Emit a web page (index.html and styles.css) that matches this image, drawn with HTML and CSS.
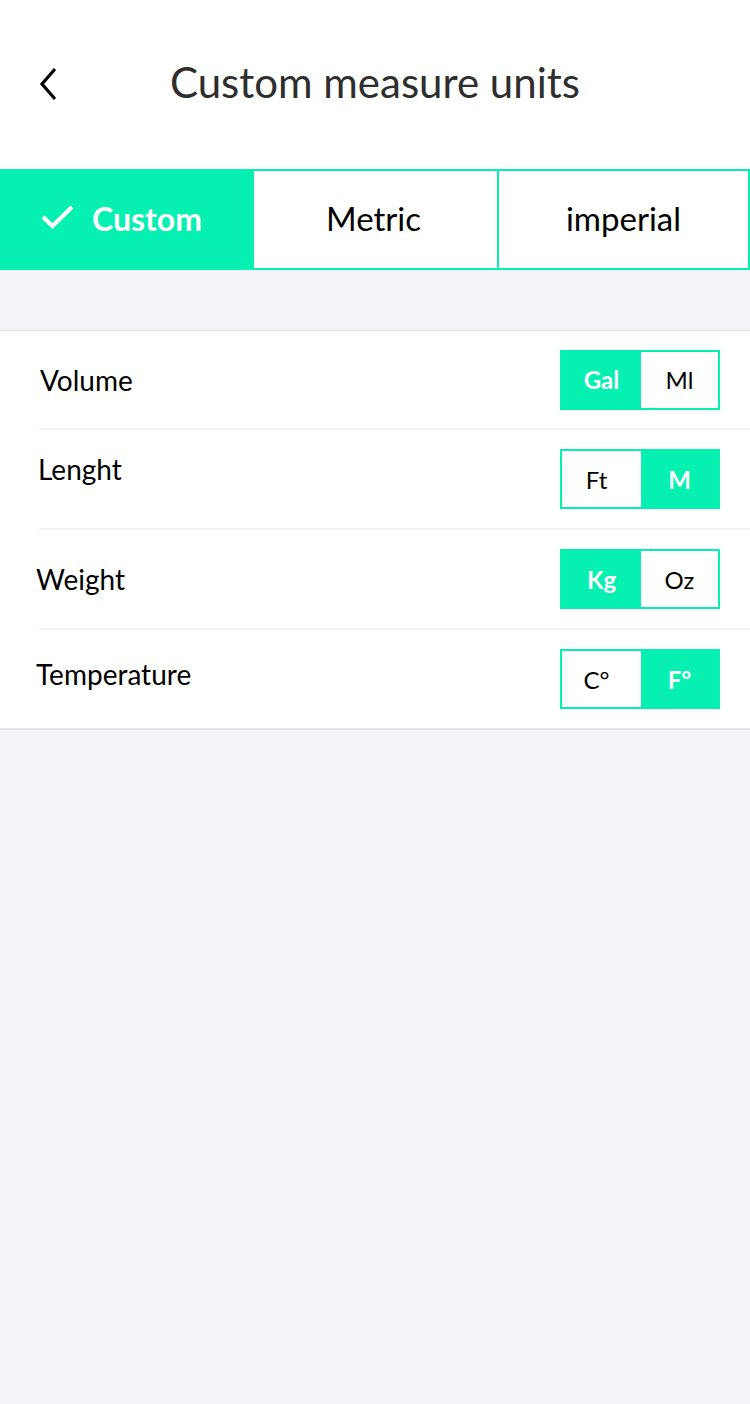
FILE: index.html
```html
<!DOCTYPE html>
<html>
<head>
<meta charset="utf-8">
<link rel="stylesheet" href="styles.css">
</head>
<body>
<div class="page">
  <header class="header">
    <button class="back" aria-label="Back">
      <svg width="20" height="34" viewBox="0 0 20 34"><path d="M17 2 L4 17 L17 32" fill="none" stroke="#000" stroke-width="3.2"/></svg>
    </button>
    <h1 class="title">Custom measure units</h1>
  </header>
  <nav class="tabs">
    <div class="tab tab-active">
      <svg class="check" width="35" height="26" viewBox="0 0 35 26"><path d="M3 13 L12.5 22 L32 3" fill="none" stroke="#fff" stroke-width="4.2"/></svg>
      <span>Custom</span>
    </div>
    <div class="tab tab-metric">Metric</div>
    <div class="tab tab-imperial">imperial</div>
  </nav>
  <div class="spacer"></div>
  <section class="list">
    <div class="row">
      <span class="label label-volume">Volume</span>
      <div class="toggle"><span class="opt on">Gal</span><span class="opt">Ml</span></div>
    </div>
    <div class="row">
      <span class="label label-length">Lenght</span>
      <div class="toggle"><span class="opt">Ft</span><span class="opt on">M</span></div>
    </div>
    <div class="row">
      <span class="label label-weight">Weight</span>
      <div class="toggle"><span class="opt on">Kg</span><span class="opt">Oz</span></div>
    </div>
    <div class="row row-last">
      <span class="label label-temp">Temperature</span>
      <div class="toggle"><span class="opt">C°</span><span class="opt on">F°</span></div>
    </div>
  </section>
</div>
</body>
</html>
```
FILE: styles.css
```css
* { box-sizing: border-box; }
html, body { margin: 0; padding: 0; }
body {
  font-family: Lato, "Open Sans", sans-serif;
  background: #f4f5f9;
  width: 750px;
  height: 1404px;
}
.page { display: flex; flex-direction: column; }
.header {
  height: 169px;
  background: #fff;
  display: flex;
  align-items: center;
  position: relative;
  justify-content: center;
}
.back {
  position: absolute;
  left: 38px;
  top: 67px;
  border: 0;
  background: none;
  padding: 0;
  width: 20px;
  height: 34px;
  display: flex;
}
.title {
  margin: 0;
  margin-top: -5px;
  font-weight: 400;
  font-size: 42px;
  color: #2e2e2e;
  letter-spacing: 0;
}
.tabs {
  display: flex;
  height: 101px;
  background: #06f0b1;
  padding: 2px;
  gap: 2px;
}
.tab {
  display: flex;
  align-items: center;
  justify-content: center;
  font-size: 33px;
  color: #000;
  background: #fff;
  padding-bottom: 3px;
}
.tab-active {
  width: 250px;
  background: #06f0b1;
  color: #fff;
  font-weight: 700;
  font-size: 32px;
  gap: 17px;
  justify-content: flex-start;
  padding-left: 38px;
}
.check { margin-top: -2px; }
.tab-metric { width: 243px; padding-right: 4px; }
.tab-imperial { flex: 1; }
.spacer {
  height: 61px;
  border-bottom: 1px solid #e1e3e6;
}
.list {
  background: #fff;
  border-bottom: 2px solid #e4e6e9;
}
.row {
  height: 100px;
  display: flex;
  align-items: center;
  justify-content: space-between;
  margin-left: 39px;
  padding-right: 30px;
  border-bottom: 2px solid #f2f2f3;
}
.row:first-child { height: 99px; }
.row-last { border-bottom: 0; height: 98px; }
.label { font-size: 28px; color: #000; margin-left: -1px; }
.label-volume { margin-left: 1px; }
.label-length { margin-top: -20px; }
.label-weight { margin-left: -3px; }
.label-temp { margin-left: -3px; margin-top: -10px; }
.toggle {
  display: flex;
  width: 160px;
  height: 60px;
  border: 2px solid #06f0b1;
}
.opt {
  flex: none;
  width: 79px;
  display: flex;
  align-items: center;
  justify-content: center;
  font-size: 24px;
  color: #000;
}
.opt + .opt { width: 77px; }
.opt:first-child:not(.on) { padding-right: 10px; }
.opt.on {
  background: #06f0b1;
  color: #fff;
  font-weight: 700;
}
```
